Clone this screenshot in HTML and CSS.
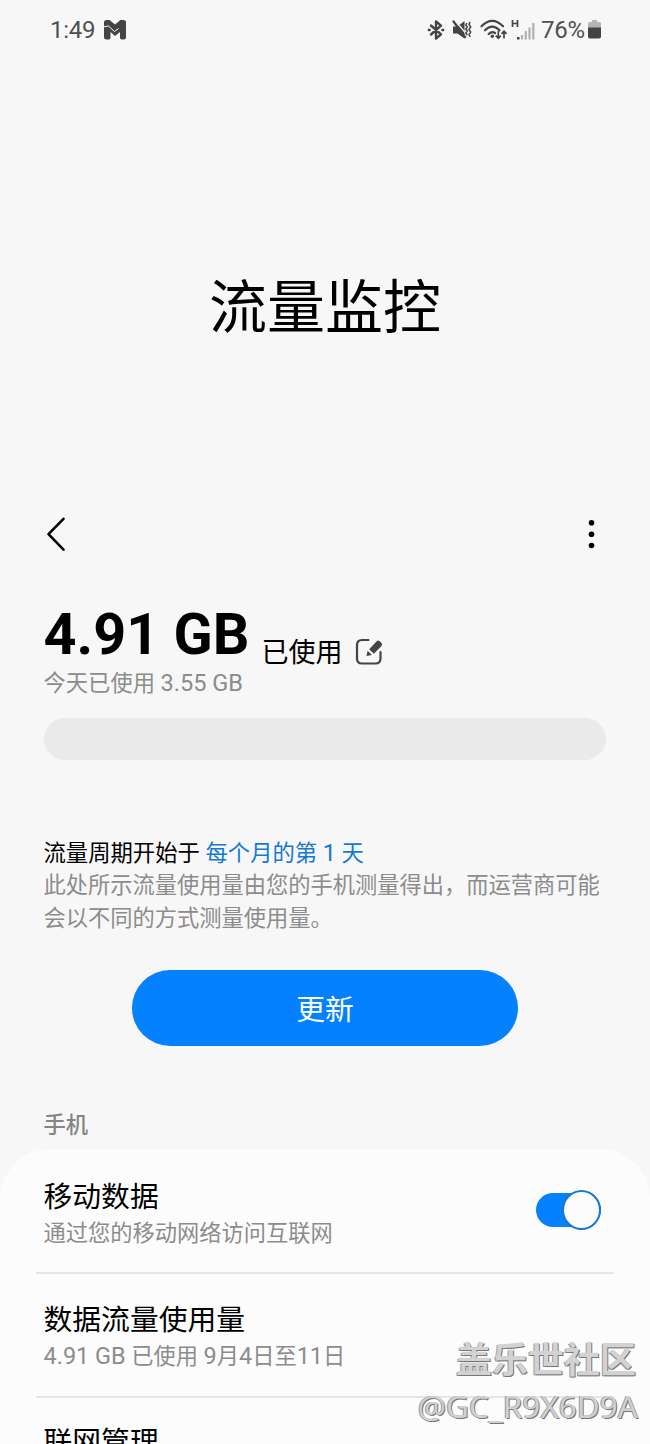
FILE: index.html
```html
<!DOCTYPE html>
<html lang="zh-CN">
<head>
<meta charset="utf-8">
<title>流量监控</title>
<link rel="stylesheet" href="styles.css">
</head>
<body>
<div class="screen">
  <header class="status">
    <span class="clock">1:49</span>
    <svg class="mail" width="24" height="22" viewBox="0 0 24 22"><path d="M1 3.500Q1 1 3.500 1h3L12 5.500 17.500 1h3Q23 1 23 3.500V18q0 2.500-2.500 2.500h-1.700q-1.800 0-1.800-2V13l-5 4-4.500-4v5.500q0 2-1.800 2H3.500Q1 20.500 1 18z" fill="#444"/><path d="M0 8l5.500-1 6 5.500 4-3" fill="none" stroke="#f7f7f7" stroke-width="1"/></svg>
    <span class="spacer"></span>
    <svg class="bt" width="18" height="20" viewBox="0 0 18 20" fill="none" stroke="#444" stroke-width="2.400" stroke-linecap="round" stroke-linejoin="round"><path d="M4 5.500l10 8.800-5 4.200v-17l5 4.200L4 14.500"/><path d="M1.800 10h.8M15.400 10h.8"/></svg>
    <svg class="mute" width="20" height="20" viewBox="0 0 20 20"><path d="M1 6.500h4.500L12.500 1v17.500L5.500 13.500H1z" fill="#444"/><path d="M3.500 1l10 12" stroke="#f7f7f7" stroke-width="1.200"/><path d="M1.500 1.500L13 17" stroke="#444" stroke-width="2.200" stroke-linecap="round"/><path d="M14.800 3l-1 2 1.500 2-1.500 2 1.500 2-1.500 2 1.500 2M18 2l-1 2.500 1.700 2.500-1.700 2.500 1.700 2.500-1.700 2.500 1.200 2.500" fill="none" stroke="#444" stroke-width="1.500"/></svg>
    <svg class="wifi" width="28" height="22" viewBox="0 0 28 22"><g fill="none" stroke="#444" stroke-width="2.200" stroke-linecap="round"><path d="M1.500 7.200Q12.200-3.600 23 7.200M5 11.300Q12.200 4 19.500 11.300M8.700 15Q12 11.800 15 14"/></g><circle cx="12.300" cy="17.300" r="1.700" fill="#444"/><path d="M18.300 12v7M15.800 16.700l2.500 2.600 2.500-2.600M24 19.500v-7M21.500 14.800L24 12.200l2.500 2.600" fill="none" stroke="#444" stroke-width="1.700"/></svg>
    <svg class="signal" width="24" height="22" viewBox="0 0 24 22"><path d="M1.500 1v7M6.500 1v7M1.500 4.500h5" fill="none" stroke="#444" stroke-width="1.700"/><path d="M6 18h2.500v2.500H6z" fill="#444"/><path d="M11 16v4.500M14.800 12v8.500M18.500 8.500v12M22.300 4v16.500" stroke="#b0b0b0" stroke-width="2.200"/></svg>
    <span class="percent">76%</span>
    <svg class="battery" width="13" height="20" viewBox="0 0 13 20"><path d="M4 0h5v2h2.500A1.500 1.500 0 0 1 13 3.500V9H0V3.500A1.500 1.500 0 0 1 1.500 2H4z" fill="#b5b5b5"/><path d="M0 7.500h13v9a2 2 0 0 1-2 2H2a2 2 0 0 1-2-2z" fill="#444"/></svg>
  </header>
  <h1 class="title">流量监控</h1>
  <nav class="toolbar">
    <svg width="22" height="36" viewBox="0 0 22 36"><path d="M18.500 2.800L3.500 18.200l15 15.500" fill="none" stroke="#000" stroke-width="2.600" stroke-linecap="round" stroke-linejoin="round"/></svg>
    <svg width="10" height="36" viewBox="0 0 10 36"><circle cx="5.500" cy="6.800" r="2.800"/><circle cx="5.500" cy="18.200" r="2.800"/><circle cx="5.500" cy="29.500" r="2.800"/></svg>
  </nav>
  <section class="usage">
    <div class="total"><strong class="amount">4.91 GB</strong><span class="used">已使用</span>
      <svg class="edit" width="28" height="28" viewBox="0 0 28 28"><path d="M13.500 2H7Q2 2 2 7v13.500q0 5 5 5h13.500q5 0 5-5V14" fill="none" stroke="#444" stroke-width="2.200" stroke-linecap="round"/><path d="M14.200 11.200l7.500-8q1.500-1.500 3 0l1.800 1.900q1.300 1.400 0 2.900l-7.700 7.800zM12.700 12.800l4.200 4.200-5.500 1z" fill="#444"/></svg>
    </div>
    <p class="today">今天已使用 <span class="latin">3.55 GB</span></p>
    <div class="bar"></div>
    <p class="cycle">流量周期开始于 <a class="day">每个月的第 <span class="latin">1</span> 天</a></p>
    <p class="note">此处所示流量使用量由您的手机测量得出，而运营商可能会以不同的方式测量使用量。</p>
  </section>
  <button class="update">更新</button>
  <h2 class="group">手机</h2>
  <section class="card">
    <div class="row">
      <div class="text"><div class="name">移动数据</div><div class="desc">通过您的移动网络访问互联网</div></div>
      <div class="switch"><span class="knob"></span></div>
    </div>
    <div class="row">
      <div class="text"><div class="name">数据流量使用量</div><div class="desc"><span class="latin">4.91 GB</span> 已使用 <span class="latin">9</span>月<span class="latin">4</span>日至<span class="latin">11</span>日</div></div>
    </div>
    <div class="row"><div class="text"><div class="name">联网管理</div></div></div>
  </section>
  <div class="watermark"><div class="community">盖乐世社区</div><div class="author">@GC_R9X6D9A</div></div>
</div>
</body>
</html>
```
FILE: styles.css
```css
* { box-sizing: border-box; }
body { margin: 0; background: #f7f7f7; color: #000; font-family: Roboto, "Noto Sans CJK SC", sans-serif; }
h1, h2, p { margin: 0; font-weight: 400; }
svg { display: block; flex: none; }
.screen { position: relative; width: 650px; height: 1444px; overflow: hidden; }
.status { display: flex; align-items: center; height: 60px; padding: 0 49px 0 50px; color: #505050; font-size: 24px; line-height: 30px; }
.clock { width: 45px; letter-spacing: -.3px; }
.mail { margin-left: 8px; }
.spacer { flex: 1; }
.mute { margin-left: 7px; }
.wifi { margin-left: 8px; }
.signal { margin: 0 6px 0 3px; }
.percent { width: 44px; letter-spacing: -.3px; }
.battery { margin-left: 3px; }
.title { margin-top: 208px; height: 80px; line-height: 80px; font-size: 58px; text-align: center; }
.toolbar { display: flex; justify-content: space-between; margin-top: 168px; padding: 0 54px 0 45px; }
.usage { padding: 0 44px 0 43.500px; }
.total { display: flex; height: 66px; margin-top: 48px; }
.amount { width: 206px; font-size: 57.500px; line-height: 69px; white-space: nowrap; }
.used { margin: 33px 0 0 12px; font-size: 27px; line-height: 40px; white-space: nowrap; }
.edit { margin: 38px 0 0 12.500px; }
.today { margin-top: 1px; font-size: 22.300px; line-height: 32px; color: #8c8c8c; }
.latin { font-size: 1.055em; line-height: 1; }
.bar { height: 42px; margin-top: 19px; border-radius: 21px; background: #eaeaea; }
.cycle { margin-top: 77px; font-size: 22.350px; line-height: 32px; }
.day { color: #1478d4; }
.note { width: 564px; font-size: 22.250px; line-height: 33px; color: #8c8c8c; }
.update { display: block; width: 386px; height: 76px; margin: 35px auto 0; padding: 5px 0 0; border: 0; border-radius: 38px; background: #0381fe; color: #fff; font: inherit; font-size: 28.800px; line-height: 71px; }
.group { margin: 63px 0 0 43.500px; font-size: 22.300px; font-weight: 500; line-height: 32px; color: #858585; }
.card { margin-top: 8px; height: 310px; padding: 0 36px; border-radius: 50px 50px 0 0; background: #fcfcfc; }
.row { display: flex; justify-content: space-between; height: 123.500px; padding: 29px 13px 0 7.500px; }
.row + .row { padding-top: 27px; border-top: 2px solid #e6e6e6; }
.row + .row + .row { padding-top: 25px; }
.row:first-child { height: 123px; }
.name { font-size: 28.800px; line-height: 38px; }
.desc { font-size: 22.250px; line-height: 34px; color: #8c8c8c; }
.switch { display: flex; justify-content: flex-end; align-items: center; width: 65px; height: 34px; margin-top: 15px; border-radius: 17px; background: #0381fe; }
.knob { flex: none; width: 39px; height: 40px; border: 2px solid #1478d4; border-radius: 50%; background: #fcfcfc; }
.watermark { position: absolute; right: 12px; bottom: 15px; text-align: right; white-space: nowrap; }
.community { margin: 0 2px 2px 0; font-family: "Noto Sans CJK SC", sans-serif; font-size: 36px; font-weight: 700; line-height: 48px; color: #d2d2d2; text-shadow: 1px 1px 0 #777, -1px 1px 0 #999; }
.author { font-family: "Noto Sans", sans-serif; font-size: 31.500px; line-height: 46px; color: #d0d0d0; text-shadow: 1px 1px 0 #777, -1px 0 0 #999; }
```
